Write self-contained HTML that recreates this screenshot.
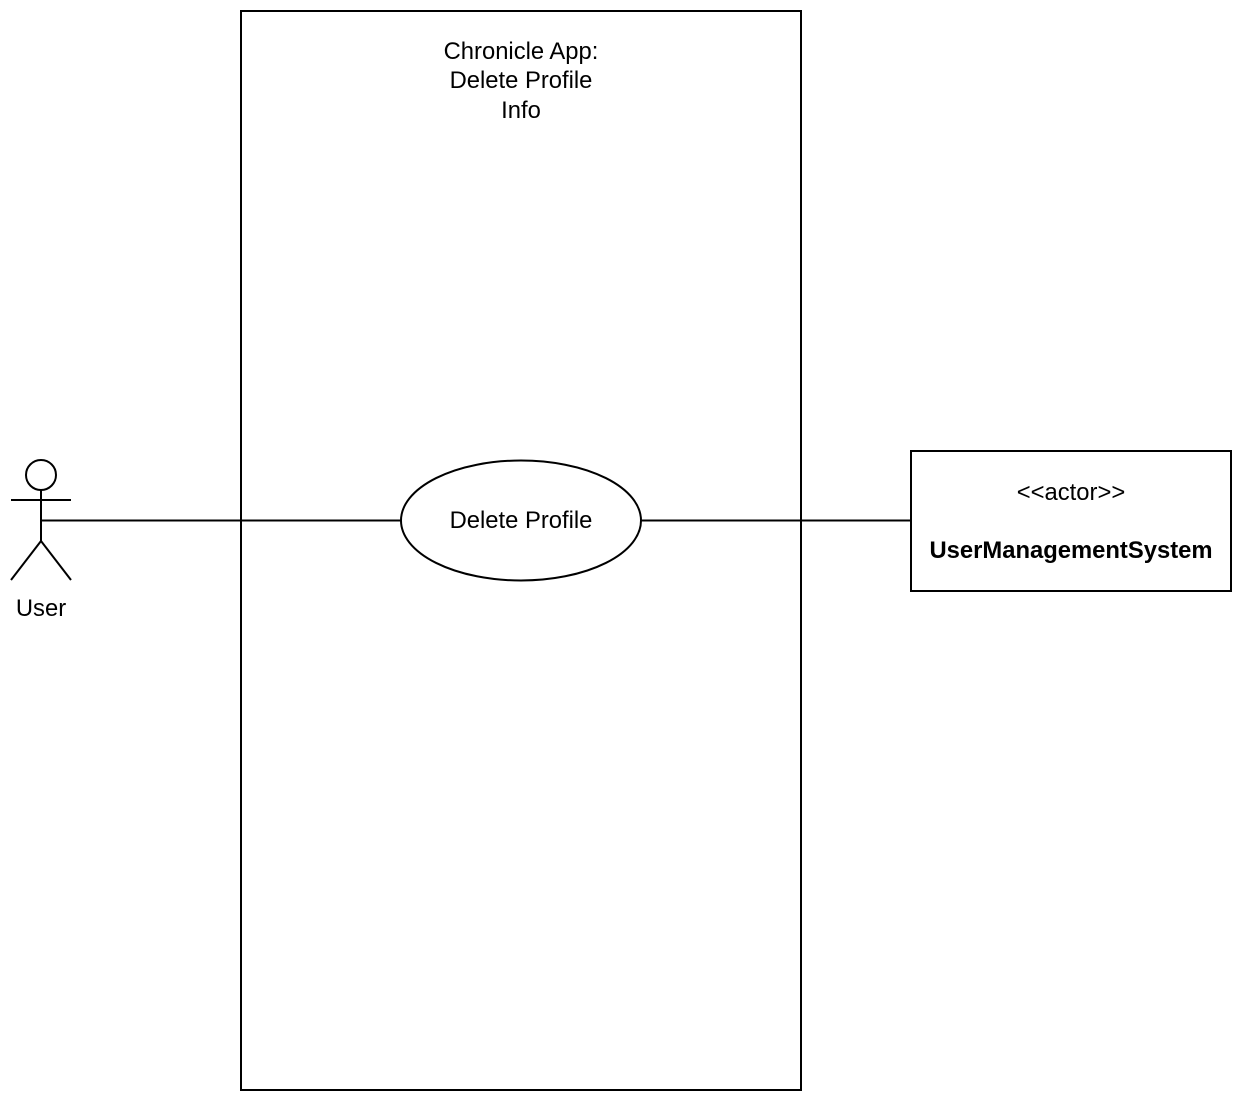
<!DOCTYPE html>
<html><head><meta charset="utf-8"><style>
html,body{margin:0;padding:0;background:#fff;width:1242px;height:1102px;overflow:hidden}
text{font-family:"Liberation Sans",Arial,sans-serif;font-size:23.8px;fill:#000}
</style></head><body>
<svg width="1242" height="1102" xmlns="http://www.w3.org/2000/svg">
<g stroke="#000" stroke-width="2" fill="none">
<rect x="241" y="11" width="560" height="1079"/>
<ellipse cx="521" cy="520.5" rx="120" ry="60" fill="#fff"/>
<line x1="41" y1="520.5" x2="401" y2="520.5"/>
<line x1="641" y1="520.5" x2="911" y2="520.5"/>
<rect x="911" y="451" width="320" height="140" fill="#fff"/>
<circle cx="41" cy="475" r="15"/>
<line x1="41" y1="490" x2="41" y2="541"/>
<line x1="11" y1="500" x2="71" y2="500"/>
<line x1="41" y1="541" x2="11" y2="580"/>
<line x1="41" y1="541" x2="71" y2="580"/>
</g>
<text x="521" y="59" text-anchor="middle">Chronicle App:</text>
<text x="521" y="88" text-anchor="middle">Delete Profile</text>
<text x="521" y="118" text-anchor="middle">Info</text>
<text x="521" y="528" text-anchor="middle">Delete Profile</text>
<text x="41" y="616" text-anchor="middle">User</text>
<text x="1071" y="500" text-anchor="middle">&lt;&lt;actor&gt;&gt;</text>
<text x="1071" y="558" text-anchor="middle" font-weight="bold">UserManagementSystem</text>
</svg>
</body></html>
